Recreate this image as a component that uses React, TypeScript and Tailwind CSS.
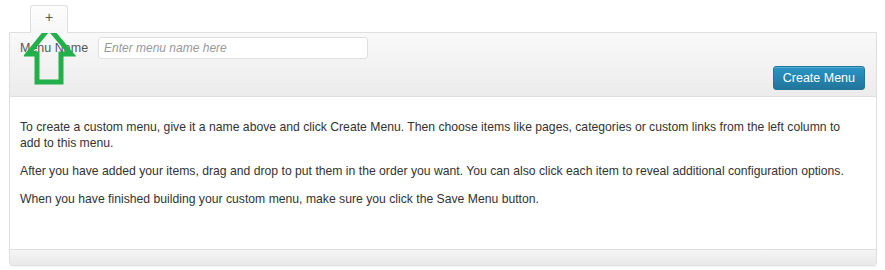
import React from 'react'

// Menu editor: empty state with "create menu" tab

const App = () => {
  return (
    <div className="relative h-[270px] w-[885px] bg-white font-['Liberation_Sans',Arial,sans-serif] text-[#333]">
      {/* Tabs */}
      <div className="flex h-[32px] items-end pl-[30px] pt-[4px]">
        <div className="relative z-10 -mb-px flex h-[28px] w-[38px] items-start justify-center rounded-t-[3px] border border-b-0 border-[#dfdfdf] bg-gradient-to-b from-[#fdfdfd] to-[#f7f7f7] pt-[4px] text-[14px] leading-[14px] text-[#555]">
          +
        </div>
      </div>

      {/* Panel */}
      <div className="mx-[9px] w-[868px] rounded-b-[3px] border border-[#dfdfdf] shadow-[0_1px_1px_rgba(0,0,0,0.04)]">
        {/* Header */}
        <div className="h-[64px] border-b border-[#dfdfdf] bg-gradient-to-b from-[#f9f9f9] to-[#ececec] px-[10px] pt-[4px]">
          <div className="flex items-center">
            <label className="w-[78px] text-[12.5px] text-[#555]">Menu Name</label>
            <input
              className="h-[22px] w-[270px] rounded-[3px] border border-[#dfdfdf] bg-white px-[5px] text-[12px] italic text-[#333] placeholder:text-[#999] outline-none"
              placeholder="Enter menu name here"
            />
          </div>
          <div className="mt-[7px] flex justify-end">
            <button className="mr-px h-[24px] rounded-[3px] border border-[#21759b] bg-gradient-to-b from-[#2a95c5] to-[#21759b] px-[9px] text-[12.5px] text-white shadow-[inset_0_1px_0_rgba(120,200,230,0.5)]">
              Create Menu
            </button>
          </div>
        </div>

        {/* Body */}
        <div className="h-[152px] bg-white pl-[10px] pr-[26px] pt-[22px] text-[12.2px] leading-[16px]">
          <p className="mb-[12px]">
            To create a custom menu, give it a name above and click Create Menu. Then choose items like pages,
            categories or custom links from the left column to add to this menu.
          </p>
          <p className="mb-[12px]">
            After you have added your items, drag and drop to put them in the order you want. You can also click each
            item to reveal additional configuration options.
          </p>
          <p>When you have finished building your custom menu, make sure you click the Save Menu button.</p>
        </div>

        {/* Footer */}
        <div className="h-[16px] border-t border-[#dfdfdf] bg-gradient-to-b from-[#f5f5f5] to-[#e9e9e9]"></div>
      </div>

      {/* Annotation arrow */}
      <svg className="absolute left-[24px] top-[24px]" width="52" height="62" viewBox="0 0 52 62">
        <polygon
          points="25,4 4,30 13,30 13,58 37,58 37,30 47,30"
          fill="none"
          stroke="#22b04b"
          strokeWidth="5"
          strokeLinejoin="miter"
        />
      </svg>
    </div>
  )
}

export default App
